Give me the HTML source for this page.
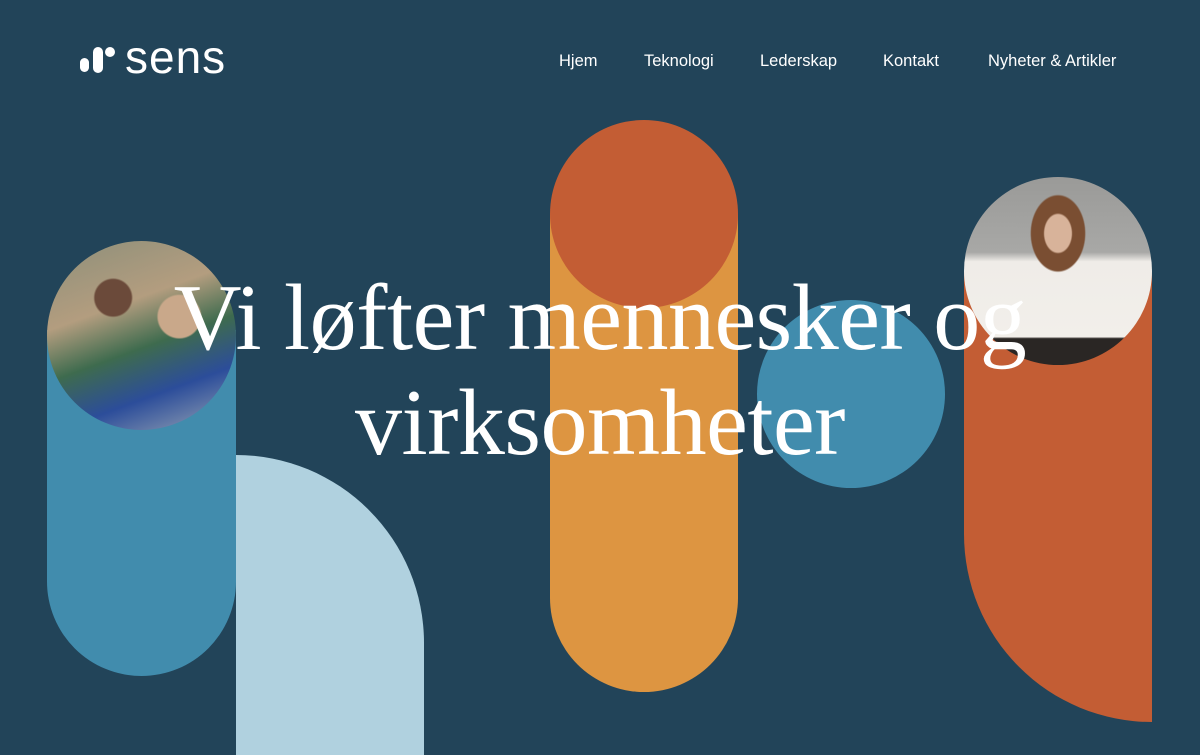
<!DOCTYPE html>
<html><head><meta charset="utf-8"><style>
*{margin:0;padding:0;box-sizing:border-box}
body{width:1200px;height:750px;background:#224459;overflow:hidden;position:relative;font-family:"Liberation Sans",sans-serif}
.a{position:absolute}
nav a{position:absolute;top:52px;color:#fff;font-size:16.5px;text-decoration:none}
h1{position:absolute;left:0;width:1200px;top:266px;text-align:center;color:#fff;font-family:"Liberation Serif",serif;font-weight:400;font-size:94px;line-height:105px;letter-spacing:-0.5px}
</style></head><body>
<div class="a" style="left:47px;top:330px;width:189px;height:346px;background:#418cad;border-radius:0 0 95px 95px"></div>
<div class="a" style="left:236px;top:455px;width:188px;height:300px;background:#b0d1df;border-radius:0 188px 0 0"></div>
<div class="a" style="left:47px;top:241px;width:189px;height:189px;border-radius:50%;background:radial-gradient(circle at 70% 40%,#c9a88a 0 12%,transparent 13%),radial-gradient(circle at 35% 30%,#6b4a3a 0 10%,transparent 11%),linear-gradient(160deg,#8d8f7a 0%,#b39d7f 35%,#3e6b4e 55%,#2c4d9a 75%,#9aa7b5 100%)"></div>
<div class="a" style="left:550px;top:214px;width:188px;height:478px;background:#dd9541;border-radius:0 0 94px 94px"></div>
<div class="a" style="left:550px;top:120px;width:188px;height:188px;border-radius:50%;background:#c35d34"></div>
<div class="a" style="left:757px;top:300px;width:188px;height:188px;border-radius:50%;background:#418cad"></div>
<div class="a" style="left:964px;top:272px;width:188px;height:450px;background:#c35d34;border-radius:0 0 0 188px"></div>
<div class="a" style="left:964px;top:177px;width:188px;height:188px;border-radius:50%;background:radial-gradient(ellipse at 50% 30%,#d8b39a 0 10%,#7a4e32 11% 20%,transparent 21%),linear-gradient(180deg,#9a9a98 0%,#a8a8a6 40%,#efece8 45%,#f2efea 85%,#2a2624 86%)"></div>
<div class="a" style="left:80px;top:58px;width:9px;height:14px;border-radius:5px;background:#fff"></div>
<div class="a" style="left:93px;top:47px;width:10px;height:26px;border-radius:5px;background:#fff"></div>
<div class="a" style="left:105px;top:47px;width:10px;height:10px;border-radius:50%;background:#fff"></div>
<div class="a" style="left:125px;top:32px;color:#fff;font-size:46px;line-height:50px;letter-spacing:1px">sens</div>
<nav>
<a style="left:559px">Hjem</a><a style="left:644px">Teknologi</a><a style="left:760px">Lederskap</a><a style="left:883px">Kontakt</a><a style="left:988px">Nyheter &amp; Artikler</a>
</nav>
<h1>Vi løfter mennesker og<br>virksomheter</h1>
</body></html>
